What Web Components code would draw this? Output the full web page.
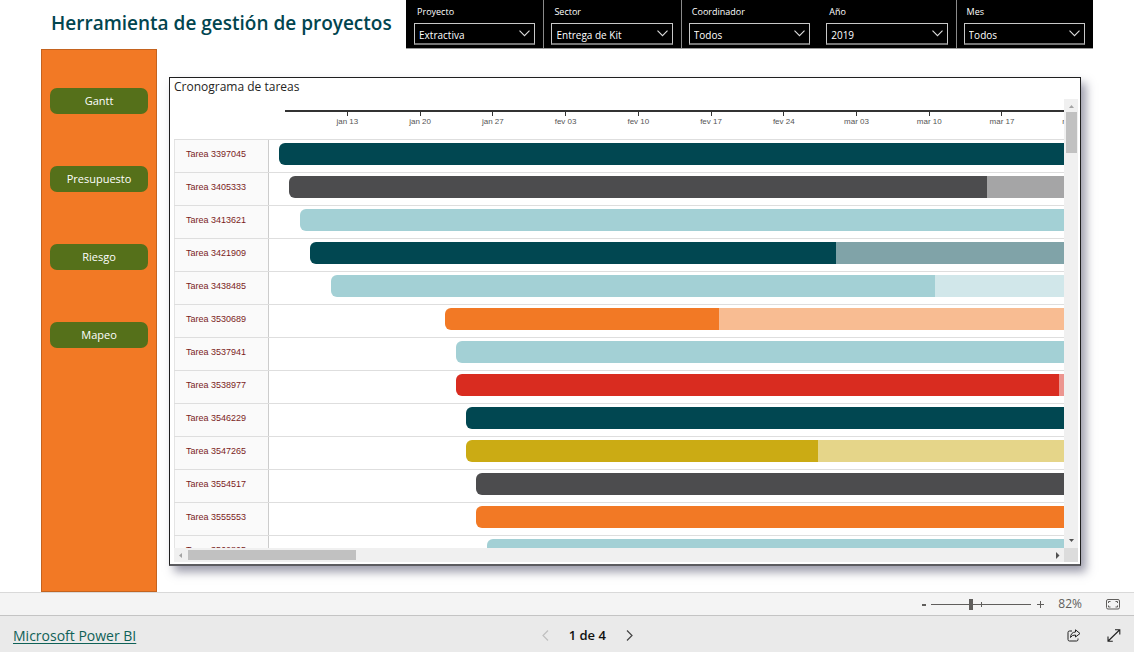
<!DOCTYPE html>
<html lang="es">
<head>
<meta charset="utf-8">
<title>Herramienta de gestión de proyectos</title>
<style>
  html, body { margin: 0; height: 100%; }
  body { font-family: "Open Sans", "Noto Sans", sans-serif; background: #fff; }
</style>
</head>
<body>
<report-app></report-app>

<template id="report-app">
  <style>
    :host { display: flex; flex-direction: column; height: 100vh; overflow: hidden; }
    main { flex: 1; min-height: 0; display: flex; flex-direction: column; padding: 0 41px; }
    header { display: flex; height: 49px; }
    h1 { flex: 1; min-width: 0; margin: 0; padding-left: 10px; font-size: 19px; line-height: 46px; font-weight: 600; color: #01454f; white-space: nowrap; }
    .filters { flex: 0 0 65.3%; display: grid; grid-template-columns: repeat(5, 1fr); background: #000; border-bottom: 1px solid #9a9a9a; box-sizing: border-box; }
    .body { flex: 1; min-height: 0; display: flex; }
    .body side-nav { flex: 0 0 116px; }
    .body gantt-card { flex: 1; min-width: 0; margin: 28px 12px 26px; }
  </style>
  <main>
    <header>
      <h1>Herramienta de gestión de proyectos</h1>
      <div class="filters">
        <slicer-filter label="Proyecto" value="Extractiva"></slicer-filter>
        <slicer-filter label="Sector" value="Entrega de Kit" divided></slicer-filter>
        <slicer-filter label="Coordinador" value="Todos" divided></slicer-filter>
        <slicer-filter label="Año" value="2019"></slicer-filter>
        <slicer-filter label="Mes" value="Todos" divided></slicer-filter>
      </div>
    </header>
    <div class="body">
      <side-nav>
        <nav-button>Gantt</nav-button>
        <nav-button>Presupuesto</nav-button>
        <nav-button>Riesgo</nav-button>
        <nav-button>Mapeo</nav-button>
      </side-nav>
      <gantt-card>Cronograma de tareas</gantt-card>
    </div>
  </main>
  <zoom-bar></zoom-bar>
  <page-footer></page-footer>
</template>

<template id="slicer-filter">
  <style>
    :host { display: block; box-sizing: border-box; padding: 4px 8px 0 7px; border-left: 1px solid #000; color: #fff; min-width: 0; }
    :host([divided]) { border-left-color: #8a8a8a; }
    label { display: block; padding-left: 3px; font-size: 9px; line-height: 16px; }
    .box { position: relative; margin-top: 3px; }
    select { appearance: none; display: block; width: 100%; height: 22px; box-sizing: border-box; margin: 0; padding: 3px 20px 0 4px; font: 10px/16px "Open Sans", "Noto Sans", sans-serif; color: #fff; background: #000; border: 1px solid #c8c8c8; border-bottom: 2px solid #767676; border-radius: 0; }
    svg { position: absolute; right: 5px; top: 7px; pointer-events: none; }
  </style>
  <label for="s"></label>
  <div class="box">
    <select id="s"><option></option></select>
    <svg width="11" height="7" viewBox="0 0 11 7" fill="none" stroke="#ddd" stroke-width="1.1"><path d="M.5.7 5.5 5.7 10.5.7"/></svg>
  </div>
</template>

<template id="side-nav">
  <style>
    :host { display: flex; flex-direction: column; gap: 52px; box-sizing: border-box; padding: 38px 8px 0; background: #f27925; border: 1px solid #c4631f; }
  </style>
  <slot></slot>
</template>

<template id="nav-button">
  <style>
    :host { display: block; }
    button { display: block; width: 100%; height: 26px; padding: 0; border: 0; border-radius: 7px; background: #55701a; color: #fff; font: 11px/24px "Open Sans", "Noto Sans", sans-serif; }
  </style>
  <button type="button"><slot></slot></button>
</template>

<template id="gantt-card">
  <style>
    :host { display: flex; flex-direction: column; box-sizing: border-box; padding: 0 2px 2px 4px; background: #fff; border: 1px solid #1f1f1f; border-bottom: 2px solid #5c5c60; box-shadow: 5px 6px 9px rgba(60, 60, 90, .5); }
    h2 { margin: 0; font-size: 12px; line-height: 18px; font-weight: 400; color: #252423; }
    .frame { flex: 1; min-height: 0; margin-top: 3px; display: grid; grid-template: minmax(0, 1fr) 14px / minmax(0, 1fr) 14px; }
    .view { overflow: hidden; }
    .axis { height: 29px; margin: 11px 0 0 111px; border-top: 2px solid #333; display: flex; padding-left: 26px; box-sizing: border-box; }
    .tick { flex: 0 0 9.66%; display: flex; flex-direction: column; align-items: center; font: 8px/9px "Liberation Sans", Arial, sans-serif; color: #555; white-space: nowrap; }
    .tick::before { content: ""; width: 1px; height: 4px; margin-bottom: 1px; background: #333; }
    .vbar, .hbar { background: #f0f0f0; display: flex; align-items: center; }
    .vbar { flex-direction: column; }
    .vbar::after, .hbar::after { content: ""; order: 2; flex: 1; }
    .vbar i { width: 11px; height: 41px; background: #c1c1c1; }
    .hbar i { height: 10px; width: 168px; background: #c1c1c1; }
    .vbar svg, .hbar svg { flex: none; display: block; }
    svg:last-of-type { order: 3; }
    .corner { background: #dcdcdc; }
  </style>
  <h2><slot></slot></h2>
  <div class="frame">
    <div class="view">
      <div class="axis"></div>
      <div class="rows"></div>
    </div>
    <div class="vbar">
      <svg width="13" height="13"><path d="M4 9h5L6.500 6z" fill="#a3a3a3"/></svg>
      <i></i>
      <svg width="13" height="13"><path d="M4 4h5L6.500 7z" fill="#505050"/></svg>
    </div>
    <div class="hbar">
      <svg width="14" height="13"><path d="M8 4v5L5 6.500z" fill="#a3a3a3"/></svg>
      <i></i>
      <svg width="13" height="13"><path d="M5 3v7L8.500 6.500z" fill="#505050"/></svg>
    </div>
    <div class="corner"></div>
  </div>
</template>

<template id="gantt-row">
  <style>
    :host { display: flex; height: 33px; box-sizing: border-box; border-top: 1px solid #dedede; }
    .name { flex: 0 0 95px; box-sizing: border-box; padding-left: 11px; border: solid #ccc; border-width: 0 1px; border-left-color: #e4e4e4; background: #fafafa; font: 9px/28px "Liberation Sans", Arial, sans-serif; color: #7a1c1c; }
    .bar { flex: 1; height: 22px; margin-top: 3px; border-radius: 6px 0 0 6px; display: flex; overflow: hidden; }
    .rest { flex: 1; opacity: .5; }
  </style>
  <div class="name"><slot></slot></div>
  <div class="bar"><div class="done"></div><div class="rest"></div></div>
</template>

<template id="zoom-bar">
  <style>
    :host { display: flex; align-items: center; justify-content: flex-end; height: 24px; box-sizing: border-box; padding-right: 14px; background: #f4f4f4; border: solid #d9d9d9; border-width: 1px 0; border-bottom-color: #c4c4c4; color: #605e5c; font-size: 12px; }
    button { border: 0; padding: 0; background: none; display: flex; color: inherit; }
    .track { position: relative; margin: 0 5px 0 4px; height: 12px; display: flex; }
    .track::after { content: ""; position: absolute; left: 50%; top: 4px; width: 1px; height: 5px; background: #605e5c; }
    input { appearance: none; width: 100px; height: 12px; margin: 0; background: linear-gradient(#605e5c, #605e5c) center / 100% 1px no-repeat; }
    input::-webkit-slider-thumb { appearance: none; width: 4px; height: 11px; background: #605e5c; }
    output { margin: 0 24px 0 13px; line-height: 22px; }
  </style>
  <button type="button" aria-label="Alejar"><svg width="6" height="9" viewBox="0 0 6 9"><path d="M1 5h4" stroke="#605e5c" stroke-width="2"/></svg></button>
  <div class="track"><input type="range" min="0" max="100" value="39" aria-label="Zoom"></div>
  <button type="button" aria-label="Acercar"><svg width="9" height="9" viewBox="0 0 9 9"><path d="M1 4.500h7M4.500 1v7" stroke="#605e5c"/></svg></button>
  <output>82%</output>
  <button type="button" aria-label="Ajustar a la página"><svg width="14" height="11" viewBox="0 0 14 11" fill="none" stroke="#605e5c"><rect x=".5" y=".5" width="13" height="9.500" rx="1.500"/><path d="M2.500 4V2.500H4.500M9.500 2.500h2V4M11.500 6.500V8h-2M4.500 8h-2V6.500"/></svg></button>
</template>

<template id="page-footer">
  <style>
    :host { display: grid; grid-template-columns: 52fr auto 48fr; align-items: center; height: 36px; padding: 0 13px; background: #eaeaea; }
    a { justify-self: start; color: #0f6157; font-size: 14px; line-height: 20px; padding-top: 4px; text-underline-offset: 2px; }
    .pager { display: flex; align-items: center; gap: 20px; font-size: 13px; line-height: 18px; font-weight: 600; color: #111; padding-top: 2px; }
    .tools { justify-self: end; display: flex; gap: 26px; padding-top: 3px; }
    button { border: 0; padding: 0; background: none; display: flex; }
  </style>
  <a href="#">Microsoft Power BI</a>
  <div class="pager">
    <button type="button" aria-label="Anterior"><svg width="7" height="11" viewBox="0 0 7 11" fill="none" stroke="#c0c0c0" stroke-width="1.200"><path d="M6 .5 1 5.500l5 5"/></svg></button>
    <span>1 de 4</span>
    <button type="button" aria-label="Siguiente"><svg width="7" height="11" viewBox="0 0 7 11" fill="none" stroke="#444" stroke-width="1.200"><path d="M1 .5l5 5-5 5"/></svg></button>
  </div>
  <div class="tools">
    <button type="button" aria-label="Compartir"><svg width="14" height="13" viewBox="0 0 14 13" fill="none" stroke="#222" stroke-linejoin="round"><path d="M5 2H2.500Q1 2 1 3.500V10.500Q1 12 2.500 12H9.500Q11 12 11 10.500V9.500"/><path d="M8.500.8 13 4.500 8.500 8V6Q5 5.700 3.500 8.500 3.800 3.200 8.500 3z"/></svg></button>
    <button type="button" aria-label="Pantalla completa"><svg width="14" height="13" viewBox="0 0 14 13" fill="none" stroke="#222" stroke-width="1.100"><path d="M1.200 12 12.500 1M8 .8h4.800V5.500M1 7.500v4.800H5.800"/></svg></button>
  </div>
</template>

<script>
  const COLORS = { teal: '#014751', grey: '#4c4c4e', aqua: '#a3d0d5', orange: '#f27925', red: '#d92c20', gold: '#cbab14' };

  // start: offset of the bar in the plot; done: length of the completed part, when it ends in view
  const TASKS = [
    { id: 3397045, color: 'teal', start: 10 },
    { id: 3405333, color: 'grey', start: 20, done: 698 },
    { id: 3413621, color: 'aqua', start: 31 },
    { id: 3421909, color: 'teal', start: 41, done: 526 },
    { id: 3438485, color: 'aqua', start: 62, done: 604 },
    { id: 3530689, color: 'orange', start: 176, done: 274 },
    { id: 3537941, color: 'aqua', start: 187 },
    { id: 3538977, color: 'red', start: 187, done: 603 },
    { id: 3546229, color: 'teal', start: 197 },
    { id: 3547265, color: 'gold', start: 197, done: 352 },
    { id: 3554517, color: 'grey', start: 207 },
    { id: 3555553, color: 'orange', start: 207 },
    { id: 3562805, color: 'aqua', start: 218 }
  ];
  const WEEKS = ['jan 13', 'jan 20', 'jan 27', 'fev 03', 'fev 10', 'fev 17', 'fev 24', 'mar 03', 'mar 10', 'mar 17', 'mar 24'];

  class Base extends HTMLElement {
    constructor() {
      super();
      const tpl = document.getElementById(this.localName);
      this.attachShadow({ mode: 'open' }).append(tpl.content.cloneNode(true));
    }
    $(sel) { return this.shadowRoot.querySelector(sel); }
  }

  class SlicerFilter extends Base {
    connectedCallback() {
      this.$('label').textContent = this.getAttribute('label');
      this.$('option').textContent = this.getAttribute('value');
    }
  }

  class GanttRow extends Base {
    set task(t) {
      this.textContent = 'Tarea ' + t.id;
      const color = COLORS[t.color];
      this.$('.bar').style.marginLeft = t.start + 'px';
      this.$('.done').style.cssText = `background:${color};flex:${t.done ? `0 0 ${t.done}px` : '1'}`;
      if (t.done) this.$('.rest').style.background = color;
      else this.$('.rest').remove();
    }
  }

  class GanttCard extends Base {
    connectedCallback() {
      for (const w of WEEKS) {
        const tick = document.createElement('div');
        tick.className = 'tick';
        tick.textContent = w;
        this.$('.axis').append(tick);
      }
      for (const t of TASKS) {
        const row = document.createElement('gantt-row');
        row.task = t;
        this.$('.rows').append(row);
      }
    }
  }

  customElements.define('slicer-filter', SlicerFilter);
  customElements.define('side-nav', class extends Base {});
  customElements.define('nav-button', class extends Base {});
  customElements.define('gantt-row', GanttRow);
  customElements.define('gantt-card', GanttCard);
  customElements.define('zoom-bar', class extends Base {});
  customElements.define('page-footer', class extends Base {});
  customElements.define('report-app', class extends Base {});
</script>
</body>
</html>
